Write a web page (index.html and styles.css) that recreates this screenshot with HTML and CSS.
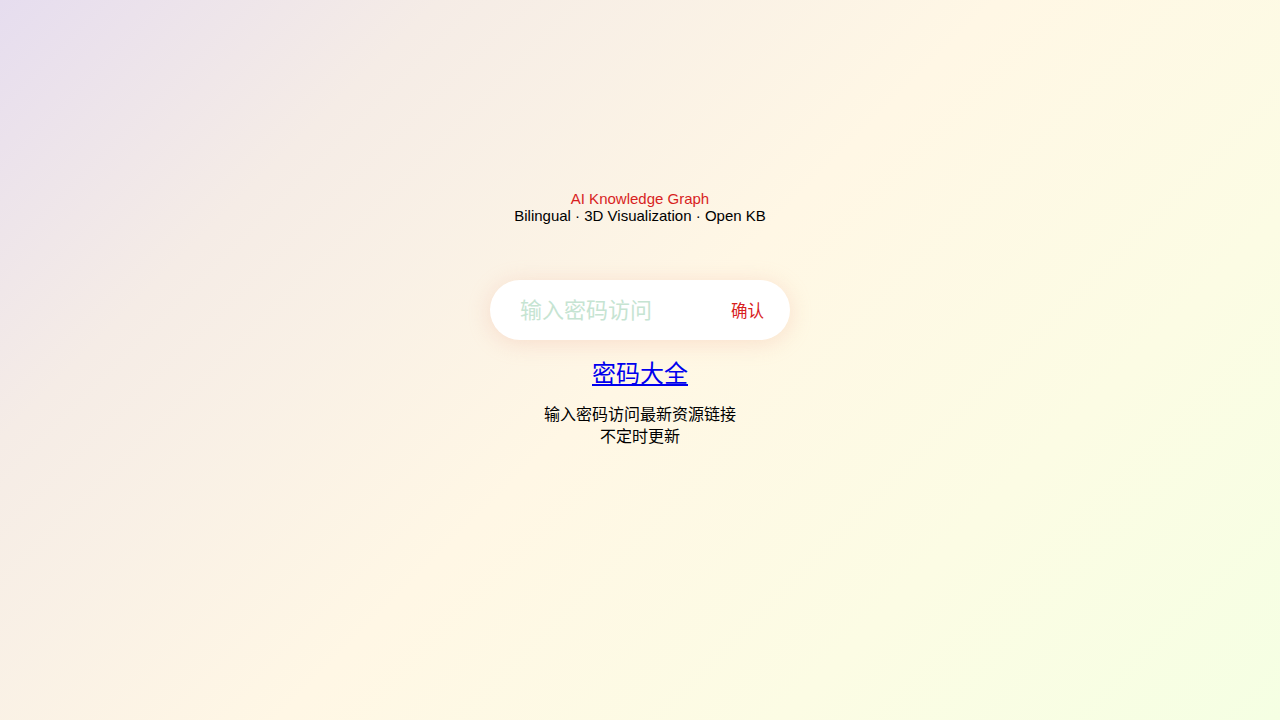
FILE: index.html
```html
<!DOCTYPE html>
<html lang="zh">
<head>
<meta charset="utf-8">
<title>AI Knowledge Graph</title>
<link rel="stylesheet" href="styles.css">
</head>
<body>
<main class="page">
  <header class="head">
    <div class="title">AI Knowledge Graph</div>
    <div class="subtitle">Bilingual · 3D Visualization · Open KB</div>
  </header>
  <form class="pill" onsubmit="return false">
    <input class="pill-input" type="password" placeholder="输入密码访问">
    <button class="pill-btn" type="submit">确认</button>
  </form>
  <a class="biglink" href="#">密码大全</a>
  <p class="note">输入密码访问最新资源链接<br>不定时更新</p>
</main>
</body>
</html>
```
FILE: styles.css
```css
html, body {
  margin: 0;
  padding: 0;
  height: 100%;
}
body {
  background: linear-gradient(135deg, #e6ddef 0%, #f5ece6 22%, #fff7e5 50%, #fcfce4 75%, #f5ffe3 100%);
  font-family: "Liberation Sans", "Noto Sans CJK SC", sans-serif;
  color: #000;
}
.page {
  display: flex;
  flex-direction: column;
  align-items: center;
  padding-top: 190px;
}
.head {
  text-align: center;
  font-size: 15px;
  line-height: 17px;
}
.title {
  color: #d81e1e;
}
.pill {
  margin-top: 56px;
  width: 300px;
  height: 60px;
  box-sizing: border-box;
  background: #fff;
  border-radius: 30px;
  box-shadow: 0 3px 22px rgba(240, 170, 150, 0.32);
  display: flex;
  align-items: center;
  padding: 0 26px 0 30px;
}
.pill-input {
  flex: 1;
  min-width: 0;
  border: none;
  outline: none;
  background: transparent;
  font-family: "Noto Sans CJK SC", sans-serif;
  font-size: 22px;
  color: #333;
  padding: 0;
  margin-bottom: 5px;
}
.pill-input::placeholder {
  color: #c6e4d2;
}
.pill-btn {
  border: none;
  background: transparent;
  color: #d81e1e;
  font-family: "Noto Sans CJK SC", sans-serif;
  font-size: 16.5px;
  padding: 0;
  margin-top: 0;
  cursor: pointer;
}
.biglink {
  margin-top: 16px;
  font-family: "Noto Sans CJK SC", sans-serif;
  font-size: 24px;
  line-height: 32px;
  color: #0000ee;
}
.note {
  margin: 14px 0 0;
  text-align: center;
  font-family: "Noto Sans CJK SC", sans-serif;
  font-size: 16px;
  line-height: 22px;
}
```
